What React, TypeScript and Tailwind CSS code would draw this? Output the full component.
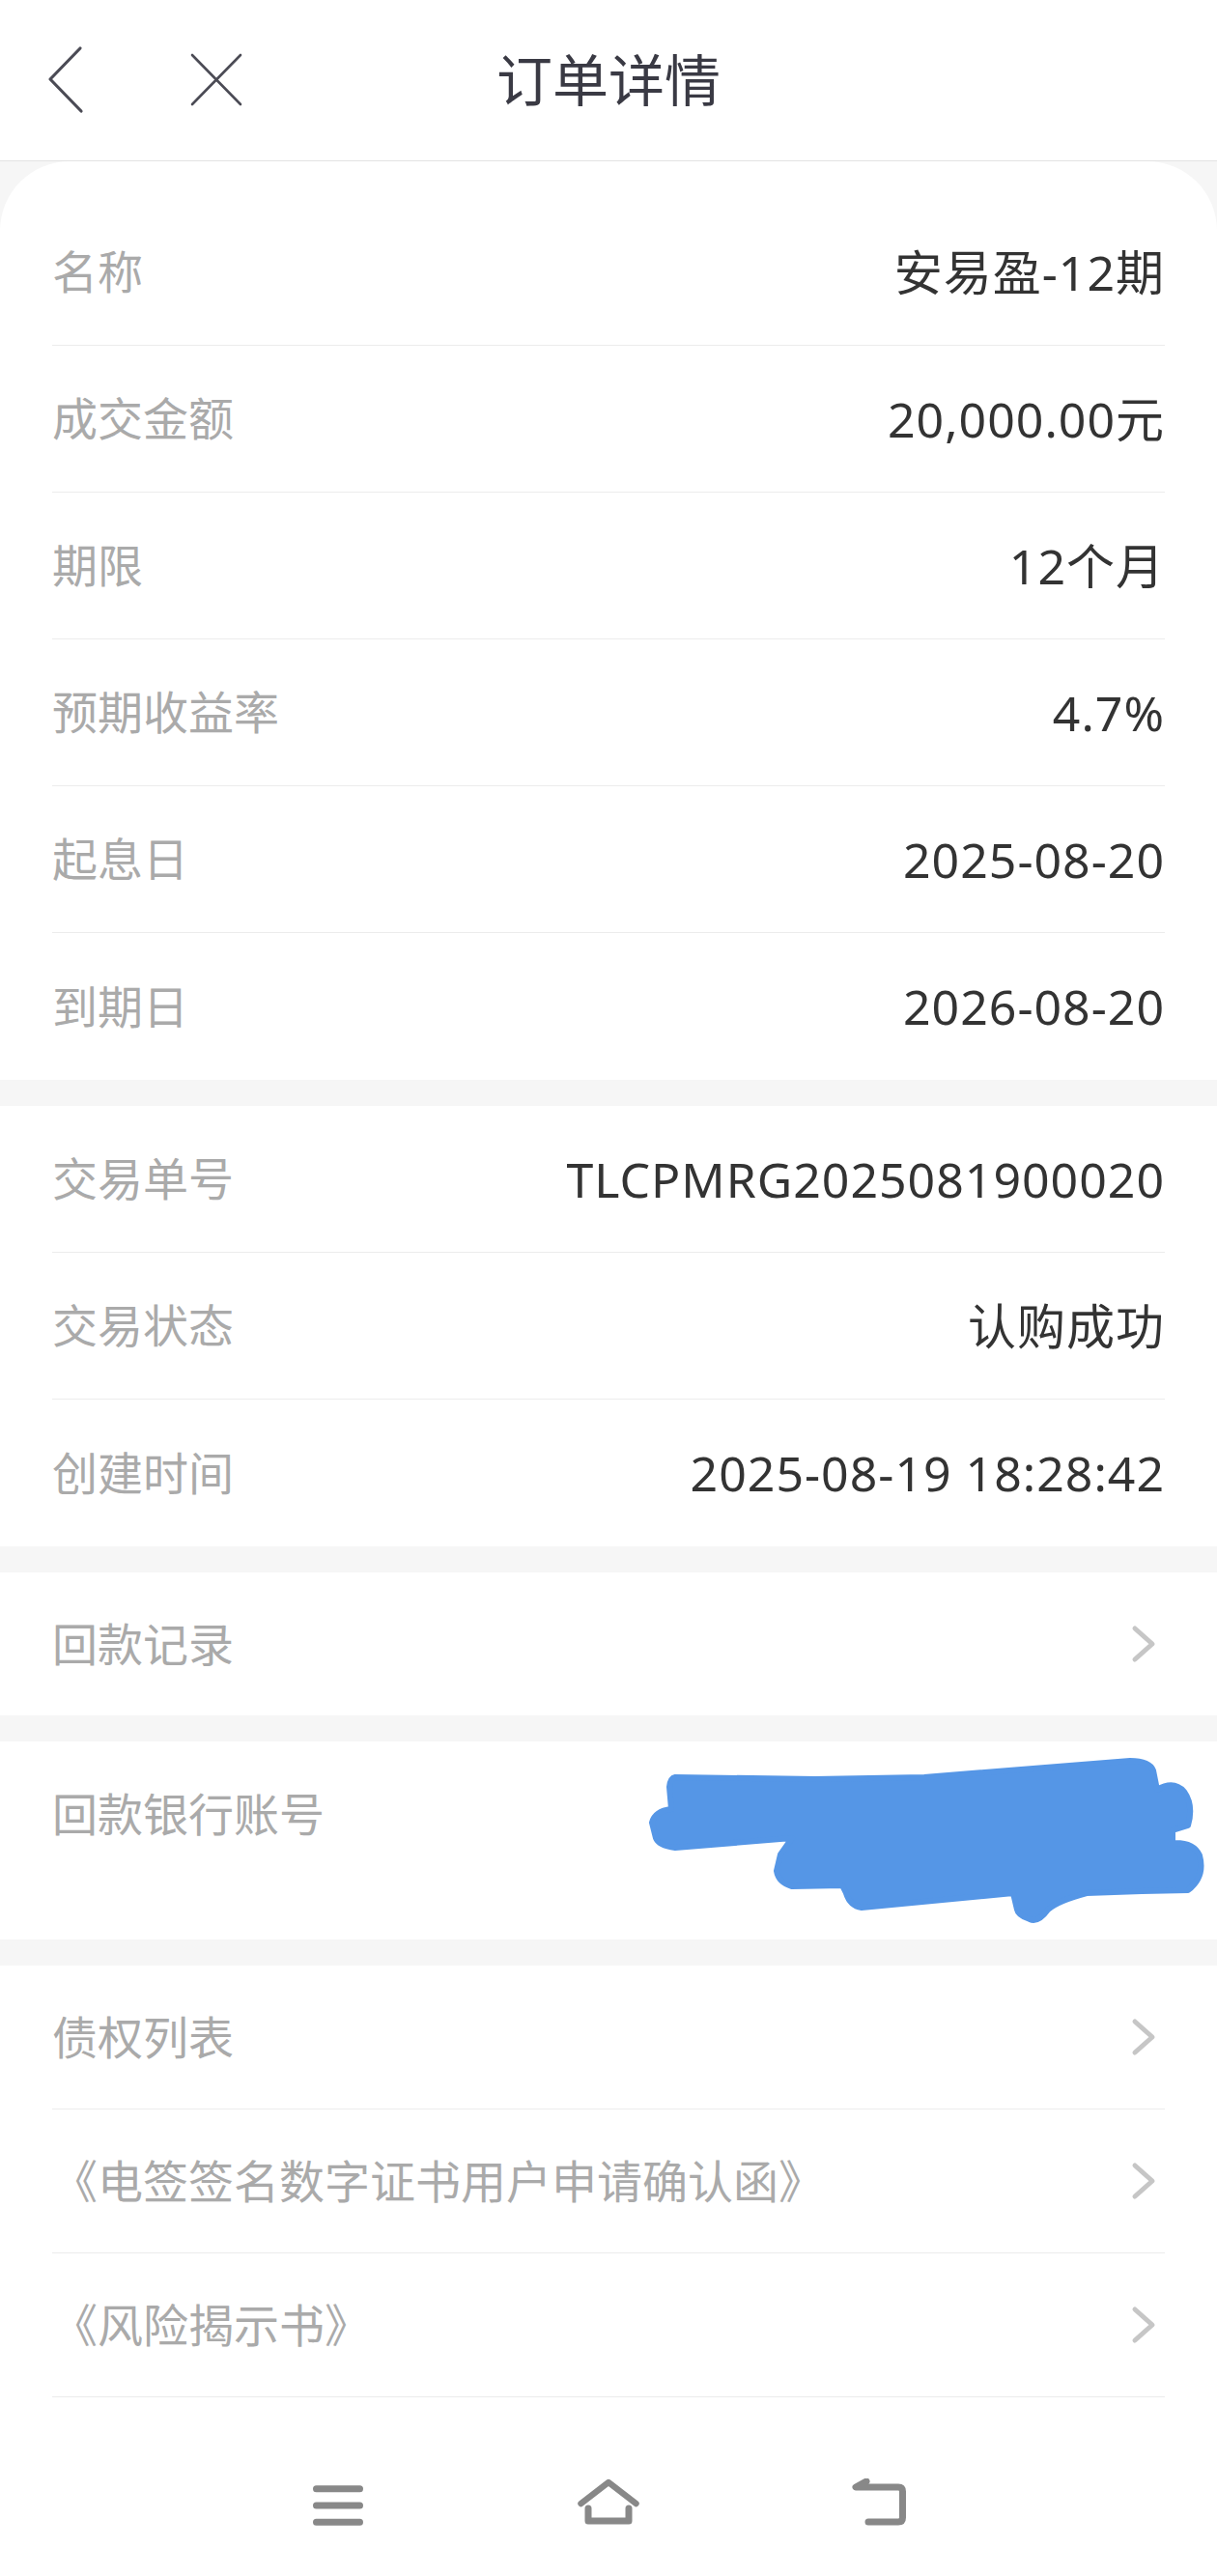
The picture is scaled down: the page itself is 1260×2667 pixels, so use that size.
import React from "react"

const detailRows = [
    ["名称", "安易盈-12期"],
    ["成交金额", "20,000.00元"],
    ["期限", "12个月"],
    ["预期收益率", "4.7%"],
    ["起息日", "2025-08-20"],
    ["到期日", "2026-08-20"],
]

const tradeRows = [
    ["交易单号", "TLCPMRG2025081900020"],
    ["交易状态", "认购成功"],
    ["创建时间", "2025-08-19 18:28:42"],
]

const linkRows = [
    "债权列表",
    "《电签签名数字证书用户申请确认函》",
    "《风险揭示书》",
]

const Chevron = () => (
    <svg width="40" height="44" viewBox="0 0 40 44" fill="none">
        <path
            d="M9 6 L27 22 L9 38"
            stroke="#c6c6c6"
            strokeWidth="5"
            strokeLinecap="round"
            strokeLinejoin="round"
        />
    </svg>
)

const InfoRow = ({ label, value, last }: { label: string; value: string; last?: boolean }) => (
    <div
        className={
            "flex h-[152px] items-center justify-between " +
            (last ? "" : "border-b border-[#ececec]")
        }
    >
        <span className="text-[47px] leading-none text-[#aaaaaa]">{label}</span>
        <span className="text-[50px] leading-none tracking-[1px] text-[#333333]">{value}</span>
    </div>
)

const LinkRow = ({ label, height, border }: { label: string; height: string; border?: boolean }) => (
    <div
        className={
            "flex items-center justify-between " +
            height +
            (border ? " border-b border-[#ececec]" : "")
        }
    >
        <span className="text-[47px] leading-none text-[#aaaaaa]">{label}</span>
        <Chevron />
    </div>
)

const Scribble = () => (
    <svg
        className="absolute left-[670px] top-0"
        width="590"
        height="205"
        viewBox="0 0 590 205"
    >
        <path
            d="M29 37 L174 39 L287 37 L500 20 Q520 20 524 30 L528 50 Q545 40 556 52 Q566 66 560 87 L544 92 L544 105 Q566 104 572 118 Q578 140 560 154 L512 155 L455 157 Q425 165 415 174 Q405 188 396 184 Q384 180 383 174 L379 157 L222 172 Q210 170 206 157 L202 149 L150 150 Q136 146 134 134 L138 117 L150 100 L29 110 Q12 108 9 100 L5 84 Q8 72 25 70 L23 47 Q24 38 29 37 Z"
            fill="#5596e6"
            stroke="#5596e6"
            strokeWidth="6"
            strokeLinejoin="round"
        />
    </svg>
)

const App = () => {
    return (
        <div className="flex min-h-[2667px] w-full flex-col bg-[#f6f6f6] font-[family-name:'Noto_Sans','Noto_Sans_CJK_SC',sans-serif]">
            {/* header */}
            <div className="grid h-[167px] grid-cols-[1fr_auto_1fr] items-center border-b border-[#e3e3e3] bg-white">
                <div className="flex items-center">
                    <svg className="ml-[40px]" width="60" height="80" viewBox="0 0 60 80" fill="none">
                        <path
                            d="M43 7 L12 39 L44 72"
                            stroke="#4b4b55"
                            strokeWidth="3.2"
                            strokeLinecap="round"
                            strokeLinejoin="round"
                        />
                    </svg>
                    <svg className="ml-[94px]" width="60" height="60" viewBox="0 0 60 60" fill="none">
                        <path
                            d="M5 4 L55 55 M55 4 L5 55"
                            stroke="#4b4b55"
                            strokeWidth="2.6"
                            strokeLinecap="round"
                        />
                    </svg>
                </div>
                <span className="text-[58px] leading-none text-[#3a3a44]">订单详情</span>
                <div />
            </div>

            <div className="flex flex-1 flex-col gap-[27px]">
                <div className="rounded-t-[72px] bg-white px-[54px] pt-[39px]">
                    {detailRows.map(([label, value], i) => (
                        <InfoRow key={label} label={label} value={value} last={i === detailRows.length - 1} />
                    ))}
                </div>

                <div className="bg-white px-[54px]">
                    {tradeRows.map(([label, value], i) => (
                        <InfoRow key={label} label={label} value={value} last={i === tradeRows.length - 1} />
                    ))}
                </div>

                <div className="bg-white px-[54px]">
                    <LinkRow label="回款记录" height="h-[148px]" />
                </div>

                <div className="relative h-[205px] bg-white px-[54px] pt-[52px]">
                    <span className="text-[47px] leading-none text-[#aaaaaa]">回款银行账号</span>
                    <Scribble />
                </div>

                <div className="flex flex-1 flex-col bg-white">
                    <div className="px-[54px]">
                        {linkRows.map((label) => (
                            <LinkRow key={label} label={label} height="h-[149px]" border />
                        ))}
                    </div>
                    <div className="flex justify-center gap-[216px] pt-[84px]">
                        <svg width="64" height="52" viewBox="0 0 64 52" fill="none">
                            <path
                                d="M9.5 10.7 H54.5 M9.5 28 H54.5 M9.5 45.3 H54.5"
                                stroke="#888888"
                                strokeWidth="7"
                                strokeLinecap="round"
                            />
                        </svg>
                        <svg width="64" height="52" viewBox="0 0 64 52" fill="none">
                            <path
                                d="M3.5 26 L32 4 L60.5 26"
                                stroke="#888888"
                                strokeWidth="6.5"
                                strokeLinecap="round"
                                strokeLinejoin="round"
                            />
                            <path
                                d="M11 31 V44 H53 V31"
                                stroke="#888888"
                                strokeWidth="7"
                                strokeLinecap="round"
                                strokeLinejoin="round"
                            />
                        </svg>
                        <svg width="64" height="52" viewBox="0 0 64 52" fill="none">
                            <path
                                d="M19 3 L8 9 H52 Q56.5 9 56.5 13.5 V40.5 Q56.5 45 52 45 H21"
                                stroke="#888888"
                                strokeWidth="7"
                                strokeLinecap="round"
                                strokeLinejoin="round"
                            />
                        </svg>
                    </div>
                </div>
            </div>
        </div>
    )
}

export default App
